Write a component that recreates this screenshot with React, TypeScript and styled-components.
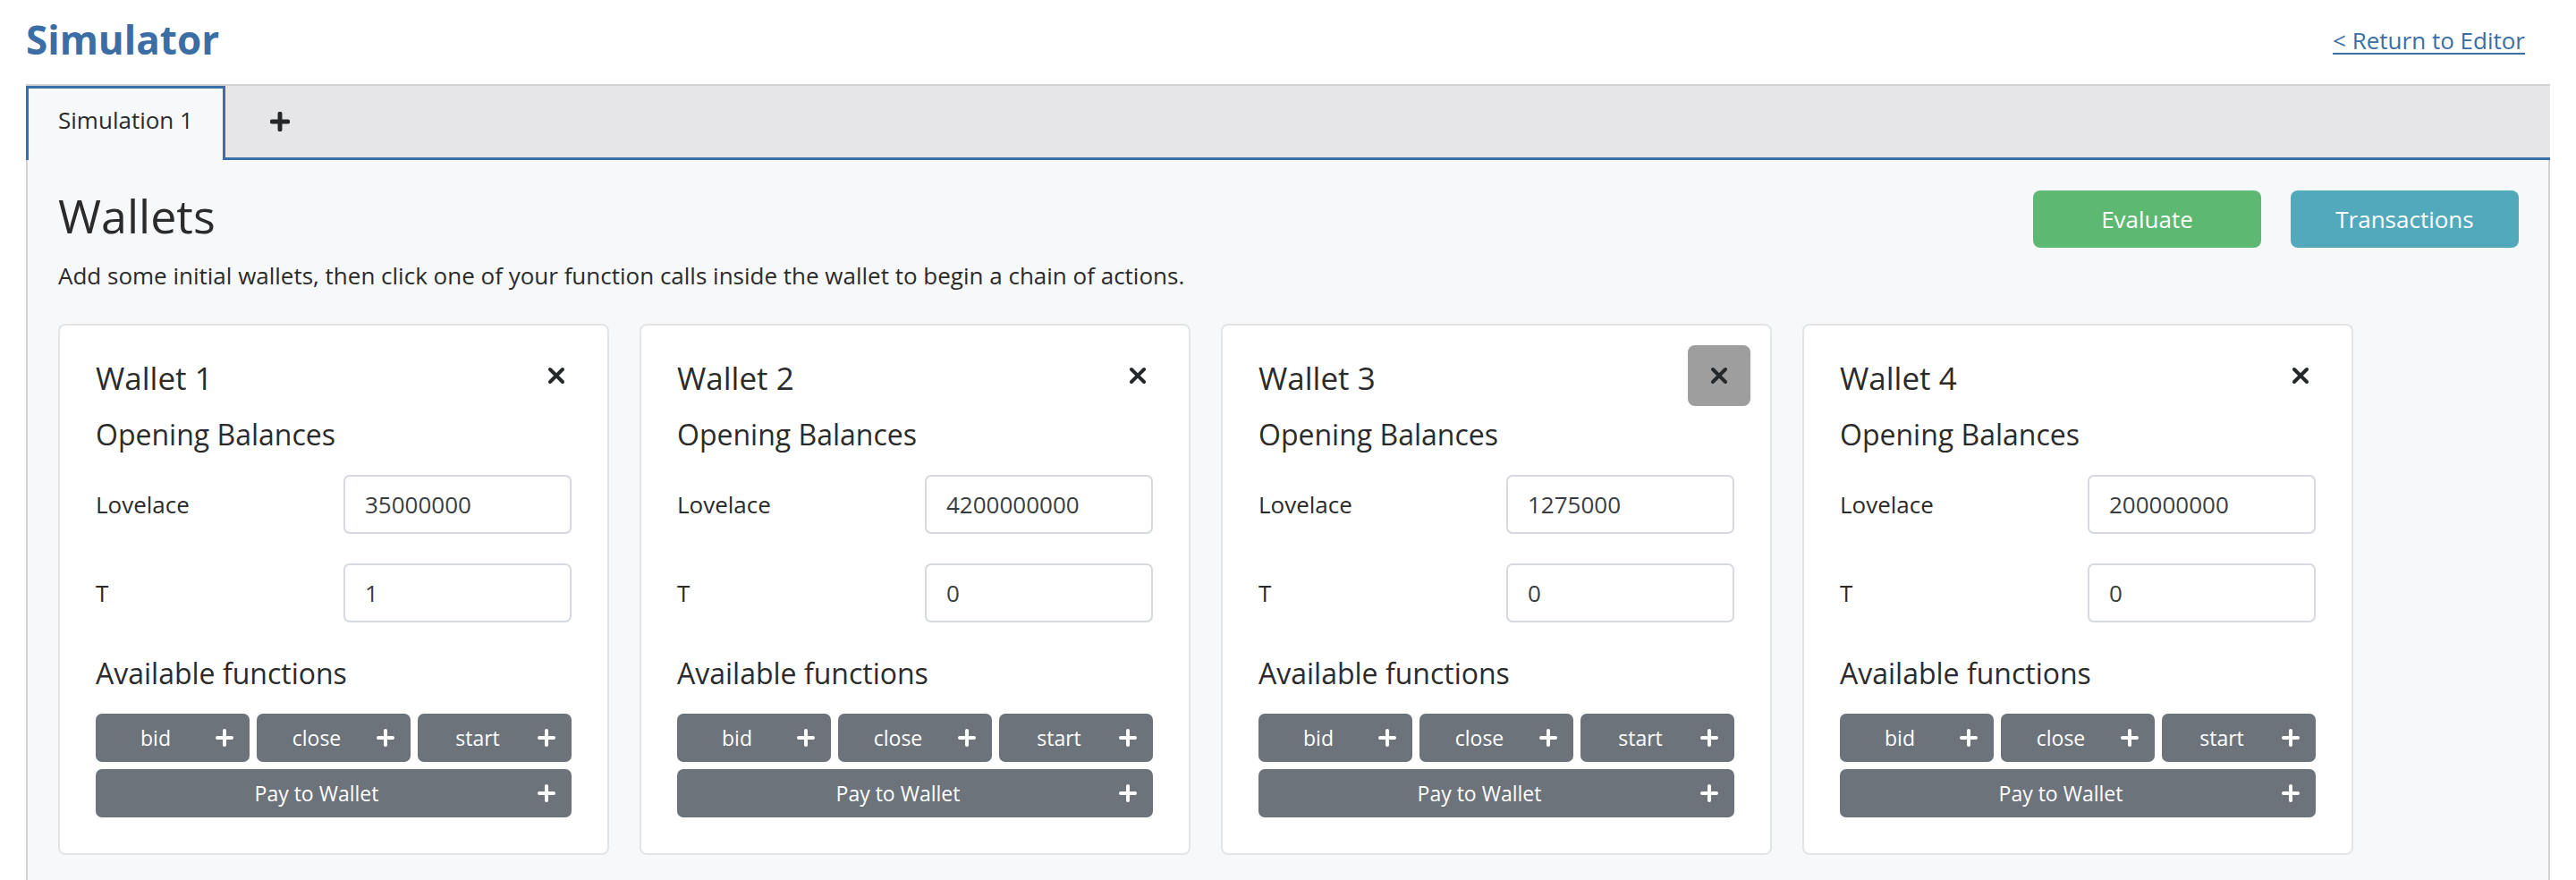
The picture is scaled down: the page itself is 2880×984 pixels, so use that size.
import React from "react";
import styled, { createGlobalStyle } from "styled-components";

const Global = createGlobalStyle`
  html, body { margin: 0; padding: 0; background: #ffffff; }
  body { font-family: "Open Sans", "Liberation Sans", sans-serif; color: #262a2e; }
  * { box-sizing: border-box; }
`;

const Page = styled.div`
  width: 2880px;
  height: 984px;
  overflow: hidden;
`;

const Header = styled.header`
  height: 94px;
  display: flex;
  justify-content: space-between;
  align-items: flex-start;
  padding: 18px 57px 0 29px;
`;

const Title = styled.h1`
  margin: 0;
  font-size: 44px;
  line-height: 53px;
  font-weight: 700;
  color: #3b6ea5;
`;

const ReturnLink = styled.a`
  margin-top: 9px;
  font-size: 26px;
  line-height: 36px;
  color: #3b6ea5;
  text-decoration: underline;
  text-underline-offset: 4px;
  text-decoration-thickness: 2px;
`;

const Frame = styled.section`
  margin: 0 29px 0 29px;
  border: 2px solid #d3d3d4;
  border-bottom: none;
  background: #f7f8fa;
  height: 900px;
`;

const TabBar = styled.nav`
  display: flex;
  height: 83px;
  background: #e6e6e8;
  border-bottom: 3px solid #3a6ea8;
  margin-left: -2px;
  margin-right: -2px;
`;

const Tab = styled.div<{ $active?: boolean }>`
  display: flex;
  align-items: center;
  justify-content: center;
  font-size: 26px;
  color: #2b2b2b;
  ${(p) =>
    p.$active
      ? `
    width: 223px;
    background: #f7f8fa;
    border: 3px solid #3a6ea8;
    border-bottom: none;
    margin-bottom: -3px;
    padding-bottom: 10px;
  `
      : `
    width: 122px;
  `}
`;

const Panel = styled.div`
  padding: 31px 33px 0 34px;
`;

const HeadRow = styled.div`
  display: flex;
  align-items: flex-start;
  justify-content: space-between;
`;

const Heading = styled.h2`
  margin: 0;
  font-size: 52px;
  line-height: 62px;
  font-weight: 400;
  color: #2b2b2b;
`;

const Actions = styled.div`
  display: flex;
  gap: 33px;
  margin-top: 3px;
`;

const ActionButton = styled.button<{ $tone: "green" | "teal" }>`
  width: 255px;
  height: 64px;
  border: none;
  border-radius: 8px;
  font-family: inherit;
  font-size: 26px;
  color: #ffffff;
  background: ${(p) => (p.$tone === "green" ? "#5db872" : "#52a9bb")};
`;

const Description = styled.p`
  margin: 13px 0 0 0;
  font-size: 26px;
  line-height: 36px;
  color: #2b2b2b;
`;

const Cards = styled.div`
  display: flex;
  gap: 34px;
  margin-top: 36px;
`;

const Card = styled.div`
  width: 616px;
  background: #ffffff;
  border: 2px solid #e3e4e6;
  border-radius: 8px;
  padding: 22px 40px 40px 40px;
`;

const CardHead = styled.div`
  display: flex;
  align-items: center;
  justify-content: space-between;
  height: 68px;
  margin-right: -18px;
`;

const WalletName = styled.h3`
  margin: 6px 0 0 0;
  font-size: 35px;
  line-height: 42px;
  font-weight: 400;
  color: #2b2b2b;
`;

const CloseButton = styled.button<{ $hover?: boolean }>`
  width: 70px;
  height: 68px;
  border: none;
  border-radius: 8px;
  padding: 0;
  display: flex;
  align-items: center;
  justify-content: center;
  background: ${(p) => (p.$hover ? "#9e9e9e" : "transparent")};
`;

const SubHeading = styled.h4`
  margin: 13px 0 0 0;
  font-size: 32px;
  line-height: 38px;
  font-weight: 400;
  color: #2b2b2b;
`;

const Balances = styled.div`
  display: grid;
  grid-template-columns: 1fr 255px;
  row-gap: 33px;
  margin-top: 26px;
  align-items: center;
`;

const Label = styled.label`
  font-size: 26px;
  color: #2b2b2b;
`;

const Input = styled.input`
  width: 255px;
  height: 66px;
  border: 2px solid #d6d9dd;
  border-radius: 7px;
  padding: 0 22px;
  font-family: inherit;
  font-size: 26px;
  color: #3a3d40;
  background: #ffffff;
`;

const FunctionsTitle = styled(SubHeading)`
  margin-top: 38px;
`;

const FunctionGrid = styled.div`
  display: grid;
  grid-template-columns: repeat(3, 1fr);
  gap: 8px;
  margin-top: 26px;
`;

const FnButton = styled.button<{ $wide?: boolean }>`
  grid-column: ${(p) => (p.$wide ? "1 / -1" : "auto")};
  height: 54px;
  display: flex;
  align-items: center;
  padding: 0 18px 0 0;
  border: none;
  border-radius: 7px;
  background: #6c737b;
  color: #ffffff;
  font-family: inherit;
  font-size: 23px;
`;

const FnLabel = styled.span`
  flex: 1;
  text-align: center;
`;

const PlusIcon = ({ size = 20, color = "#fff", stroke = 4 }: { size?: number; color?: string; stroke?: number }) => (
  <svg width={size} height={size} viewBox="0 0 20 20">
    <path d="M10 2 V18 M2 10 H18" stroke={color} strokeWidth={stroke} strokeLinecap="round" fill="none" />
  </svg>
);

const CrossIcon = () => (
  <svg width="20" height="20" viewBox="0 0 20 20">
    <path d="M3 3 L17 17 M17 3 L3 17" stroke="#25282b" strokeWidth="4" strokeLinecap="round" fill="none" />
  </svg>
);

const wallets = [
  { name: "Wallet 1", lovelace: "35000000", t: "1" },
  { name: "Wallet 2", lovelace: "4200000000", t: "0" },
  { name: "Wallet 3", lovelace: "1275000", t: "0", hover: true },
  { name: "Wallet 4", lovelace: "200000000", t: "0" },
];

export default function App() {
  return (
    <Page>
      <Global />
      <Header>
        <Title>Simulator</Title>
        <ReturnLink href="#">&lt; Return to Editor</ReturnLink>
      </Header>
      <Frame>
        <TabBar>
          <Tab $active>Simulation 1</Tab>
          <Tab>
            <PlusIcon size={22} color="#25282b" stroke={4.5} />
          </Tab>
        </TabBar>
        <Panel>
          <HeadRow>
            <Heading>Wallets</Heading>
            <Actions>
              <ActionButton $tone="green">Evaluate</ActionButton>
              <ActionButton $tone="teal">Transactions</ActionButton>
            </Actions>
          </HeadRow>
          <Description>
            Add some initial wallets, then click one of your function calls inside the wallet to begin a chain of actions.
          </Description>
          <Cards>
            {wallets.map((w) => (
              <Card key={w.name}>
                <CardHead>
                  <WalletName>{w.name}</WalletName>
                  <CloseButton $hover={w.hover}>
                    <CrossIcon />
                  </CloseButton>
                </CardHead>
                <SubHeading>Opening Balances</SubHeading>
                <Balances>
                  <Label>Lovelace</Label>
                  <Input defaultValue={w.lovelace} />
                  <Label>T</Label>
                  <Input defaultValue={w.t} />
                </Balances>
                <FunctionsTitle>Available functions</FunctionsTitle>
                <FunctionGrid>
                  {["bid", "close", "start"].map((f) => (
                    <FnButton key={f}>
                      <FnLabel>{f}</FnLabel>
                      <PlusIcon />
                    </FnButton>
                  ))}
                  <FnButton $wide>
                    <FnLabel>Pay to Wallet</FnLabel>
                    <PlusIcon />
                  </FnButton>
                </FunctionGrid>
              </Card>
            ))}
          </Cards>
        </Panel>
      </Frame>
    </Page>
  );
}
